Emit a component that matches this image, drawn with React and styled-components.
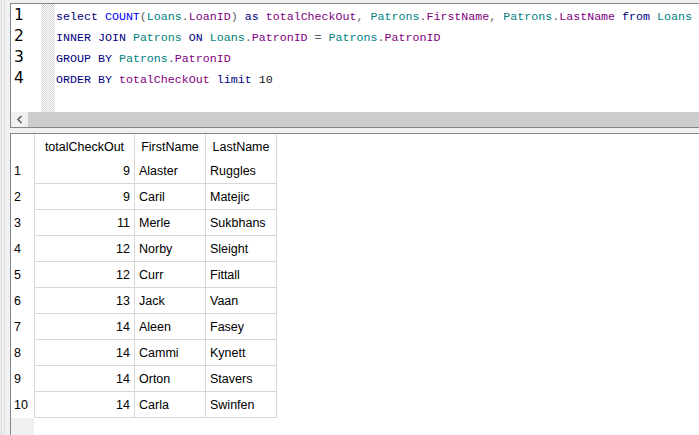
import styled, { createGlobalStyle } from "styled-components";

const GlobalStyle = createGlobalStyle`
  html, body {
    margin: 0;
    padding: 0;
    background: #f0f0f0;
    overflow: hidden;
  }
  #root {
    width: 699px;
    height: 435px;
  }
`

const Page = styled.div`
  width: 699px;
  height: 435px;
  display: flex;
  background: #f0f0f0;
  overflow: hidden;
`
const SideStrip = styled.div`
  width: 10px;
  flex-shrink: 0;
  box-sizing: border-box;
  background:
    linear-gradient(to right, transparent 1px, #dadada 1px, #dadada 2px, transparent 2px,
      transparent 4px, #dcdcdc 4px, #dcdcdc 5px, transparent 5px);
`
const Main = styled.div`
  flex: 1;
  display: flex;
  flex-direction: column;
  padding-top: 3px;
  min-width: 0;
`
const Editor = styled.div`
  height: 125px;
  box-sizing: border-box;
  border: 1px solid #828790;
  border-right: none;
  background: #fff;
  display: flex;
  flex-direction: column;
`
const EditorBody = styled.div`
  flex: 1;
  display: flex;
  min-height: 0;
`
const LineNumbers = styled.div`
  width: 30px;
  padding-top: 1px;
  padding-left: 3px;
  box-sizing: border-box;
  font-family: "DejaVu Sans", Verdana, sans-serif;
  font-size: 15.5px;
  color: #000;
`
const LineNo = styled.div`
  height: 21px;
  line-height: 21px;
`
const Hatch = styled.div`
  width: 14px;
  flex-shrink: 0;
  background-color: #fff;
  background-image: repeating-conic-gradient(#d4d4d4 0 25%, #ffffff 0 50%);
  background-size: 2px 2px;
`
const Code = styled.div`
  padding-top: 2px;
  padding-left: 1px;
  font-family: "Liberation Mono", "Courier New", monospace;
  font-size: 11.65px;
  white-space: pre;
  color: #000;
`
const CodeLine = styled.div`
  height: 21px;
  line-height: 21px;
`
const Tok = styled.span`
  color: ${p =>
    p.$k === "kw" ? "#00007f" :
    p.$k === "fn" ? "#0000ff" :
    p.$k === "tbl" ? "#007f7f" :
    p.$k === "col" ? "#7f007f" :
    p.$k === "op" ? "#5a5a5a" : "#111"};
  font-weight: ${p => (p.$k === "kw" ? 500 : 400)};
`
const HScroll = styled.div`
  height: 15px;
  display: flex;
  flex-shrink: 0;
`
const ScrollBtn = styled.div`
  width: 17px;
  background: #f0f0f0;
  display: flex;
  align-items: center;
  justify-content: center;
`
const ScrollThumb = styled.div`
  flex: 1;
  background: #cdcdcd;
`
const Splitter = styled.div`
  height: 5px;
  background: #f0f0f0;
`
const GridArea = styled.div`
  flex: 1;
  box-sizing: border-box;
  border-top: 1px solid #828790;
  border-left: 1px solid #828790;
  background: #fff;
  display: flex;
  flex-direction: column;
  font-family: "Liberation Sans", Tahoma, Arial, sans-serif;
  font-size: 12.5px;
  color: #000;
`
const Row = styled.div`
  display: flex;
  height: ${p => (p.$head ? 24 : 26)}px;
  flex-shrink: 0;
`
const RowHead = styled.div`
  width: 23px;
  box-sizing: border-box;
  padding-left: 3px;
  display: flex;
  align-items: center;
`
const Cell = styled.div`
  width: ${p => p.$w}px;
  box-sizing: border-box;
  border-right: 1px solid #d8d8d8;
  border-bottom: ${p => (p.$head ? "none" : "1px solid #d8d8d8")};
  border-left: ${p => (p.$first ? "1px solid #d8d8d8" : "none")};
  display: flex;
  align-items: center;
  justify-content: ${p => (p.$align === "right" ? "flex-end" : p.$align === "center" ? "center" : "flex-start")};
  padding: ${p => (p.$head ? "2px 4px 0" : "0 4px")};
  white-space: nowrap;
`
const Filler = styled.div`
  flex: 1;
  display: flex;
`
const FillerHead = styled.div`
  width: 23px;
  background: #f0f0f0;
`

const code = [
  [["kw", "select"], ["", " "], ["fn", "COUNT"], ["op", "("], ["tbl", "Loans"], ["op", "."], ["col", "LoanID"], ["op", ")"], ["", " "], ["kw", "as"], ["", " "], ["col", "totalCheckOut"], ["op", ","], ["", " "], ["tbl", "Patrons"], ["op", "."], ["col", "FirstName"], ["op", ","], ["", " "], ["tbl", "Patrons"], ["op", "."], ["col", "LastName"], ["", " "], ["kw", "from"], ["", " "], ["tbl", "Loans"]],
  [["kw", "INNER"], ["", " "], ["kw", "JOIN"], ["", " "], ["tbl", "Patrons"], ["", " "], ["kw", "ON"], ["", " "], ["tbl", "Loans"], ["op", "."], ["col", "PatronID"], ["", " "], ["op", "="], ["", " "], ["tbl", "Patrons"], ["op", "."], ["col", "PatronID"]],
  [["kw", "GROUP"], ["", " "], ["kw", "BY"], ["", " "], ["tbl", "Patrons"], ["op", "."], ["col", "PatronID"]],
  [["kw", "ORDER"], ["", " "], ["kw", "BY"], ["", " "], ["col", "totalCheckOut"], ["", " "], ["kw", "limit"], ["", " "], ["", "10"]],
]

const rows = [
  [9, "Alaster", "Ruggles"],
  [9, "Caril", "Matejic"],
  [11, "Merle", "Sukbhans"],
  [12, "Norby", "Sleight"],
  [12, "Curr", "Fittall"],
  [13, "Jack", "Vaan"],
  [14, "Aleen", "Fasey"],
  [14, "Cammi", "Kynett"],
  [14, "Orton", "Stavers"],
  [14, "Carla", "Swinfen"],
]

const widths = [101, 71, 71]

export default function App() {
  return (
    <Page>
      <GlobalStyle />
      <SideStrip />
      <Main>
        <Editor>
          <EditorBody>
            <LineNumbers>
              {[1, 2, 3, 4].map(n => <LineNo key={n}>{n}</LineNo>)}
            </LineNumbers>
            <Hatch />
            <Code>
              {code.map((line, i) => (
                <CodeLine key={i}>
                  {line.map(([k, t], j) => <Tok key={j} $k={k}>{t}</Tok>)}
                </CodeLine>
              ))}
            </Code>
          </EditorBody>
          <HScroll>
            <ScrollBtn>
              <svg width="7" height="9" viewBox="0 0 7 9">
                <path d="M5.5 1 L2 4.5 L5.5 8" fill="none" stroke="#606060" strokeWidth="1.6" />
              </svg>
            </ScrollBtn>
            <ScrollThumb />
          </HScroll>
        </Editor>
        <Splitter />
        <GridArea>
          <Row $head>
            <RowHead />
            <Cell $head $first $w={widths[0]} $align="center">totalCheckOut</Cell>
            <Cell $head $w={widths[1]} $align="center">FirstName</Cell>
            <Cell $head $w={widths[2]} $align="center">LastName</Cell>
          </Row>
          {rows.map((r, i) => (
            <Row key={i}>
              <RowHead>{i + 1}</RowHead>
              <Cell $first $w={widths[0]} $align="right">{r[0]}</Cell>
              <Cell $w={widths[1]}>{r[1]}</Cell>
              <Cell $w={widths[2]}>{r[2]}</Cell>
            </Row>
          ))}
          <Filler>
            <FillerHead />
          </Filler>
        </GridArea>
      </Main>
    </Page>
  );
}
